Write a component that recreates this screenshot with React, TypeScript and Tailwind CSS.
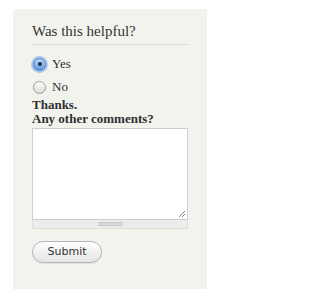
import { useState } from 'react';

function Radio({ checked, label, onClick }: { checked: boolean; label: string; onClick: () => void }) {
  return (
    <button type="button" onClick={onClick} className="flex h-[16px] items-center text-left">
      {checked ? (
        <span className="flex h-[13px] w-[13px] items-center justify-center rounded-full border border-[#3b73c7] bg-gradient-to-b from-[#bcd6f5] to-[#5d9ae3] shadow-[0_0_0_2px_rgba(110,160,230,0.55)]">
          <span className="h-[4px] w-[4px] rounded-full bg-[#1c2a44]" />
        </span>
      ) : (
        <span className="h-[13px] w-[13px] rounded-full border border-[#9c9c9c] bg-gradient-to-b from-[#fdfdfd] to-[#dcdcdc]" />
      )}
      <span className="ml-[6px] text-[13px] leading-[16px] text-[#2f2f2f]">{label}</span>
    </button>
  );
}

export default function App() {
  const [answer, setAnswer] = useState<'yes' | 'no'>('yes');

  return (
    <div className="min-h-[301px] bg-white pt-[9px] pl-[13px]" style={{ fontFamily: '"Liberation Serif", "DejaVu Serif", serif' }}>
      <div className="h-[280px] w-[194px] bg-[#f3f3ee] px-[19px] pt-[12px]">
        <div className="border-b border-[#dddcd6] pb-[3px]">
          <h2 className="text-[15px] leading-[20px] text-[#333]">Was this helpful?</h2>
        </div>

        <div className="mt-[11px] flex flex-col gap-[7px] pl-[1px]">
          <Radio checked={answer === 'yes'} label="Yes" onClick={() => setAnswer('yes')} />
          <Radio checked={answer === 'no'} label="No" onClick={() => setAnswer('no')} />
        </div>

        <div className="mt-[3px] text-[13px] font-bold leading-[14px] text-[#2f2f2f]">
          <p>Thanks.</p>
          <p>Any other comments?</p>
        </div>

        <div className="relative mt-[2px]">
          <textarea className="block h-[92px] w-full resize-none border border-[#cfcfcf] bg-white outline-none" />
          <svg className="absolute right-[2px] bottom-[11px]" width="8" height="8" viewBox="0 0 8 8">
            <path d="M7 1L1 7M7 4L4 7" stroke="#8a8a8a" strokeWidth="1" />
          </svg>
          <div className="flex h-[9px] items-center justify-center border-x border-b border-[#dedede] bg-[#ececec]">
            <div className="h-[4px] w-[25px] border-y border-[#c8c8c8] bg-[#d8d8d8]" />
          </div>
        </div>

        <button
          type="button"
          className="mt-[12px] flex h-[22px] w-[70px] items-center justify-center rounded-full border border-[#b5b5b5] bg-gradient-to-b from-[#ffffff] to-[#e4e4e4] text-[11px] text-[#333] shadow-[0_1px_1px_rgba(0,0,0,0.08)]"
          style={{ fontFamily: '"DejaVu Sans", "Liberation Sans", sans-serif' }}
        >
          Submit
        </button>
      </div>
    </div>
  );
}
